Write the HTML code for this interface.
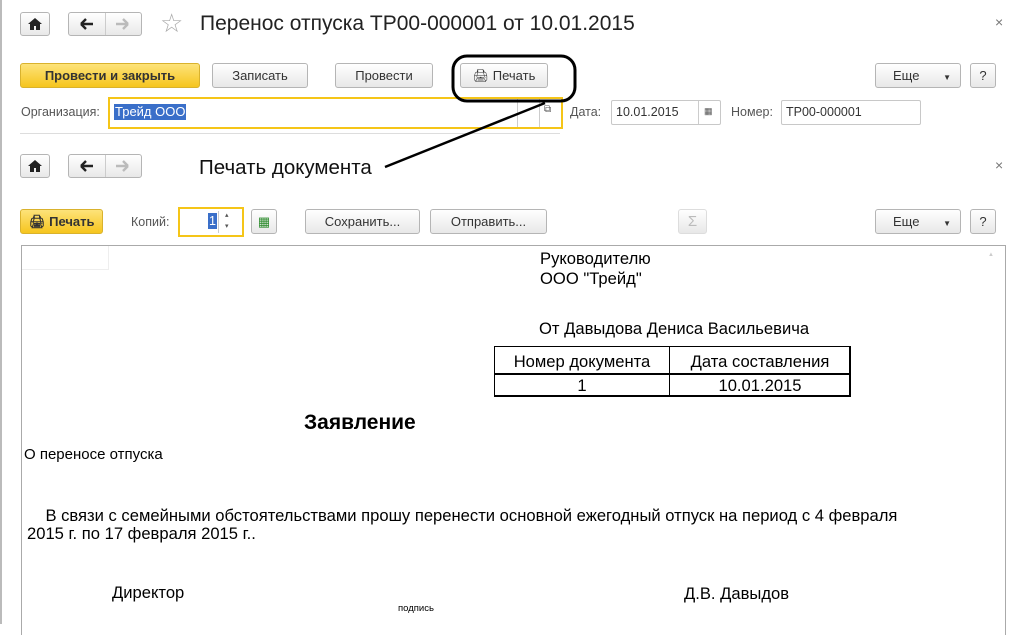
<!DOCTYPE html>
<html><head><meta charset="utf-8"><style>
*{box-sizing:border-box;margin:0;padding:0}
body{width:1014px;height:624px;overflow:hidden;background:#fff;position:relative;font-family:"Liberation Sans",Arial,sans-serif;font-size:12.5px;color:#333}
.a{position:absolute}
.btn{position:absolute;height:25px;border:1px solid #b5b5b5;border-radius:3px;background:linear-gradient(#fff,#e8e8e8);text-align:center;line-height:23px;font-size:13px;color:#333}
.y{background:linear-gradient(#fde37a,#f6c51e);border-color:#d9b22d;color:#333;font-weight:bold}
.inp{position:absolute;height:25px;border:1px solid #c8c8c8;border-radius:2px;background:#fff;line-height:23px;padding-left:4px;font-size:12.5px;color:#333}
.doc{position:absolute;font-size:16.6px;color:#000;white-space:nowrap}
</style></head><body>
<div class="a" style="left:0;top:0;width:2px;height:624px;background:#bbb"></div>
<!-- top nav -->
<div class="btn" style="left:20px;top:12px;width:30px;height:24px"><svg width="14" height="12" viewBox="0 0 14 12" style="margin-top:5px"><path d="M7 0L0 6h2v6h4V8h2v4h4V6h2z" fill="#222"/></svg></div>
<div class="btn" style="left:68px;top:12px;width:74px;height:24px"></div>
<div class="a" style="left:105px;top:13px;width:1px;height:22px;background:#ccc"></div>
<svg class="a" style="left:80px;top:18px" width="14" height="12"><path d="M1 6H13M1 6L6 1M1 6L6 11" stroke="#222" stroke-width="2.4" fill="none"/></svg>
<svg class="a" style="left:115px;top:18px" width="14" height="12"><path d="M1 6H13M13 6L8 1M13 6L8 11" stroke="#bbb" stroke-width="2.4" fill="none"/></svg>
<div class="a" style="left:160px;top:8px;font-size:26px;color:#aaa">&#9734;</div>
<div class="a" style="left:200px;top:12px;font-size:21px;color:#222">Перенос отпуска ТР00-000001 от 10.01.2015</div>
<div class="a" style="left:995px;top:14px;font-size:14px;color:#777">×</div>
<!-- toolbar 1 -->
<div class="btn y" style="left:20px;top:63px;width:180px">Провести и закрыть</div>
<div class="btn" style="left:212px;top:63px;width:96px">Записать</div>
<div class="btn" style="left:335px;top:63px;width:98px">Провести</div>
<div class="btn" style="left:460px;top:63px;width:88px">&#128424; Печать</div>
<div class="btn" style="left:875px;top:63px;width:86px;text-align:left;padding-left:17px">Еще <span style="font-size:8px;margin-left:20px">&#9660;</span></div>
<div class="btn" style="left:970px;top:63px;width:26px">?</div>
<div class="a" style="left:21px;top:105px;color:#555">Организация:</div>
<div class="a" style="left:108px;top:97px;width:455px;height:32px;border:2px solid #f5c518;background:#fff"></div>
<div class="a" style="left:114px;top:104px;background:#3a6fc9;color:#fff;font-size:13px;padding:0 1px;line-height:16px">Трейд ООО</div>
<div class="a" style="left:517px;top:99px;width:1px;height:28px;background:#ccc"></div>
<div class="a" style="left:539px;top:99px;width:1px;height:28px;background:#ccc"></div>
<div class="a" style="left:544px;top:104px;font-size:10px;color:#555">&#10697;</div>
<div class="a" style="left:570px;top:105px;color:#555">Дата:</div>
<div class="inp" style="left:611px;top:100px;width:110px">10.01.2015</div>
<div class="a" style="left:698px;top:101px;width:1px;height:23px;background:#ccc"></div>
<div class="a" style="left:704px;top:106px;font-size:9px;color:#555">&#9638;</div>
<div class="a" style="left:731px;top:105px;color:#555">Номер:</div>
<div class="inp" style="left:781px;top:100px;width:140px">ТР00-000001</div>
<div class="a" style="left:20px;top:133px;width:540px;height:1px;background:#ddd"></div>
<!-- nav 2 -->
<div class="btn" style="left:20px;top:154px;width:30px;height:24px"><svg width="14" height="12" viewBox="0 0 14 12" style="margin-top:5px"><path d="M7 0L0 6h2v6h4V8h2v4h4V6h2z" fill="#222"/></svg></div>
<div class="btn" style="left:68px;top:154px;width:74px;height:24px"></div>
<div class="a" style="left:105px;top:155px;width:1px;height:22px;background:#ccc"></div>
<svg class="a" style="left:80px;top:160px" width="14" height="12"><path d="M1 6H13M1 6L6 1M1 6L6 11" stroke="#222" stroke-width="2.4" fill="none"/></svg>
<svg class="a" style="left:115px;top:160px" width="14" height="12"><path d="M1 6H13M13 6L8 1M13 6L8 11" stroke="#bbb" stroke-width="2.4" fill="none"/></svg>
<div class="a" style="left:199px;top:156px;font-size:20.5px;color:#111">Печать документа</div>
<div class="a" style="left:995px;top:157px;font-size:14px;color:#777">×</div>
<!-- toolbar 2 -->
<div class="btn y" style="left:20px;top:209px;width:83px;text-align:left;padding-left:8px">&#128424; Печать</div>
<div class="a" style="left:131px;top:215px;color:#555">Копий:</div>
<div class="a" style="left:178px;top:207px;width:66px;height:30px;border:2px solid #f5c518;background:#fff"></div>
<div class="a" style="left:208px;top:213px;background:#3a6fc9;color:#fff;line-height:16px;padding:0 1px">1</div>
<div class="a" style="left:218px;top:211px;width:1px;height:22px;background:#ccc"></div>
<div class="a" style="left:225px;top:210px;font-size:7px;color:#555;line-height:11px">▴<br>▾</div>
<div class="btn" style="left:251px;top:209px;width:26px;color:#2a8a2a">&#9638;</div>
<div class="btn" style="left:305px;top:209px;width:115px">Сохранить...</div>
<div class="btn" style="left:430px;top:209px;width:117px">Отправить...</div>
<div class="btn" style="left:678px;top:209px;width:29px;color:#bbb;font-size:15px;border-color:#ddd">Σ</div>
<div class="btn" style="left:875px;top:209px;width:86px;text-align:left;padding-left:17px">Еще <span style="font-size:8px;margin-left:20px">&#9660;</span></div>
<div class="btn" style="left:970px;top:209px;width:26px">?</div>
<!-- document -->
<div class="a" style="left:21px;top:245px;width:985px;height:390px;border:1px solid #aaa;border-bottom:none"></div>
<div class="a" style="left:22px;top:246px;width:87px;height:24px;border-right:1px solid #eee;border-bottom:1px solid #eee"></div>
<div class="a" style="left:988px;top:252px;font-size:6px;color:#ccc">▲</div>
<div class="doc" style="left:540px;top:249px">Руководителю</div>
<div class="doc" style="left:540px;top:269px">ООО "Трейд"</div>
<div class="doc" style="left:539px;top:319px">От Давыдова Дениса Васильевича</div>
<div class="a" style="left:494px;top:346px;width:357px;height:51px;border:1px solid #000;border-right:2px solid #000;border-bottom:2px solid #000"></div>
<div class="a" style="left:494px;top:373px;width:357px;height:2px;background:#000"></div>
<div class="a" style="left:669px;top:346px;width:1px;height:50px;background:#000"></div>
<div class="doc" style="left:495px;top:352px;width:174px;text-align:center">Номер документа</div>
<div class="doc" style="left:670px;top:352px;width:180px;text-align:center">Дата составления</div>
<div class="doc" style="left:495px;top:376px;width:174px;text-align:center">1</div>
<div class="doc" style="left:670px;top:376px;width:180px;text-align:center">10.01.2015</div>
<div class="doc" style="left:304px;top:411px;font-size:21px;font-weight:bold">Заявление</div>
<div class="doc" style="left:24px;top:446px;font-size:15px">О переносе отпуска</div>
<div class="doc" style="left:27px;top:506px">&nbsp;&nbsp;&nbsp;&nbsp;В связи с семейными обстоятельствами прошу перенести основной ежегодный отпуск на период с 4 февраля</div>
<div class="doc" style="left:27px;top:524px">2015 г. по 17 февраля 2015 г..</div>
<div class="doc" style="left:112px;top:583px">Директор</div>
<div class="doc" style="left:684px;top:584px">Д.В. Давыдов</div>
<div class="doc" style="left:398px;top:603px;font-size:9.5px">подпись</div>
<!-- annotation -->
<svg class="a" style="left:0;top:0" width="1014" height="624"><rect x="453" y="56" width="122" height="45" rx="14" fill="none" stroke="#000" stroke-width="3"/><line x1="545" y1="103" x2="385" y2="167" stroke="#000" stroke-width="2.5"/></svg>
</body></html>
